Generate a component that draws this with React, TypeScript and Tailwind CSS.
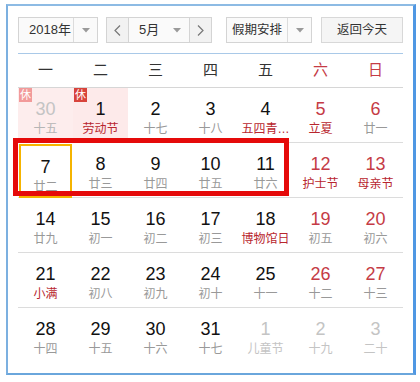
import React from "react";

type Cell = {
  n: string;
  l: string;
  nc?: string;
  lc?: string;
  bg?: string;
  badge?: string;
  today?: boolean;
};

const G = "text-[#111]";
const R = "text-[#c53b45]";
const LG = "text-[#999]";
const LR = "text-[#b8262e]";
const FADE = "text-[#c4c4c4]";

const rows: Cell[][] = [
  [
    { n: "30", l: "十五", nc: FADE, lc: "text-[#b5b5b5]", bg: "bg-[#fdeded]", badge: "bg-[#f29a9a]" },
    { n: "1", l: "劳动节", nc: G, lc: LR, bg: "bg-[#fdeaea]", badge: "bg-[#d8433b]" },
    { n: "2", l: "十七" },
    { n: "3", l: "十八" },
    { n: "4", l: "五四青…", lc: LR },
    { n: "5", l: "立夏", nc: R, lc: LR },
    { n: "6", l: "廿一", nc: R },
  ],
  [
    { n: "7", l: "廿二", today: true },
    { n: "8", l: "廿三" },
    { n: "9", l: "廿四" },
    { n: "10", l: "廿五" },
    { n: "11", l: "廿六" },
    { n: "12", l: "护士节", nc: R, lc: LR },
    { n: "13", l: "母亲节", nc: R, lc: LR },
  ],
  [
    { n: "14", l: "廿九" },
    { n: "15", l: "初一" },
    { n: "16", l: "初二" },
    { n: "17", l: "初三" },
    { n: "18", l: "博物馆日", lc: LR },
    { n: "19", l: "初五", nc: R },
    { n: "20", l: "初六", nc: R },
  ],
  [
    { n: "21", l: "小满", lc: LR },
    { n: "22", l: "初八" },
    { n: "23", l: "初九" },
    { n: "24", l: "初十" },
    { n: "25", l: "十一" },
    { n: "26", l: "十二", nc: R },
    { n: "27", l: "十三", nc: R },
  ],
  [
    { n: "28", l: "十四" },
    { n: "29", l: "十五" },
    { n: "30", l: "十六" },
    { n: "31", l: "十七" },
    { n: "1", l: "儿童节", nc: FADE, lc: "text-[#c4c4c4]" },
    { n: "2", l: "十九", nc: FADE, lc: "text-[#c4c4c4]" },
    { n: "3", l: "二十", nc: FADE, lc: "text-[#c4c4c4]" },
  ],
];

const Arrow = () => (
  <svg width="8" height="5" viewBox="0 0 8 5">
    <path d="M0 0 L8 0 L4 4.5 Z" fill="#9a9a9a" />
  </svg>
);

export default function App() {
  return (
    <div
      className="w-[420px] h-[382px] bg-white pt-[4px] pl-[6px]"
      style={{ fontFamily: '"Liberation Sans", "Noto Sans CJK SC", sans-serif' }}
    >
      <div className="relative w-[410px] h-[371px] border-t-2 border-l-2 border-b-[2px] border-r-[3px] border-t-[#8dbbe4] border-l-[#7cb0e0] border-b-[#6aa6dc] border-r-[#4f97e3] pl-[10px] pt-[11px]">
        {/* controls */}
        <div className="flex items-center h-[26px] text-[13px] text-[#333] whitespace-nowrap">
          <div className="flex h-[26px] w-[80px] shrink-0 border border-[#d4d4d4] bg-[#fafafa]">
            <div className="flex-1 flex items-center pl-[10px]">2018年</div>
            <div className="w-[24px] border-l border-[#dcdcdc] flex items-center justify-center">
              <Arrow />
            </div>
          </div>
          <div className="ml-[8px] flex h-[26px] w-[106px] shrink-0 border border-[#d4d4d4] bg-[#fafafa]">
            <div className="w-[22px] flex items-center justify-center bg-[#f2f2f2] border-r border-[#d4d4d4] text-[#777]">
              <svg width="7" height="11" viewBox="0 0 7 11">
                <path d="M6 0.5 L1 5.5 L6 10.5" stroke="#777" strokeWidth="1.2" fill="none" />
              </svg>
            </div>
            <div className="flex-1 flex items-center pl-[10px] pr-[8px] justify-between">
              <span>5月</span>
              <Arrow />
            </div>
            <div className="w-[22px] flex items-center justify-center bg-[#f2f2f2] border-l border-[#d4d4d4]">
              <svg width="7" height="11" viewBox="0 0 7 11">
                <path d="M1 0.5 L6 5.5 L1 10.5" stroke="#777" strokeWidth="1.2" fill="none" />
              </svg>
            </div>
          </div>
          <div className="ml-[14px] flex h-[26px] w-[86px] shrink-0 border border-[#d4d4d4] bg-[#fafafa]">
            <div className="flex-1 flex items-center justify-center text-[12.5px]">假期安排</div>
            <div className="w-[24px] shrink-0 border-l border-[#dcdcdc] flex items-center justify-center">
              <Arrow />
            </div>
          </div>
          <div className="ml-[9px] flex h-[26px] w-[82px] shrink-0 border border-[#d8d8d8] bg-[#f5f5f5] items-center justify-center text-[12.5px]">
            返回今天
          </div>
        </div>
        {/* divider */}
        <div className="mt-[10px] w-[385px] h-px bg-[#a9c9e8]" />
        {/* weekdays */}
        <div className="grid grid-cols-7 w-[385px] h-[34px] border-b border-[#d6d6d6] text-[15px] items-center text-center">
          {["一", "二", "三", "四", "五"].map((d) => (
            <div key={d} className="text-[#333]">{d}</div>
          ))}
          <div className="text-[#c53b45]">六</div>
          <div className="text-[#c53b45]">日</div>
        </div>
        {/* rows */}
        {rows.map((row, ri) => (
          <div
            key={ri}
            className={`grid grid-cols-7 w-[385px] h-[55px] ${ri < 4 ? "border-b border-[#dcdcdc]" : ""}`}
          >
            {row.map((c, ci) => (
              <div
                key={ci}
                className={`relative flex flex-col items-center pt-[10px] ${c.bg ?? ""} ${c.today ? "m-[1px] border-2 border-[#f5b400] pt-[8px]" : ""}`}
              >
                {c.badge && (
                  <div
                    className={`absolute left-[1px] top-0 w-[13px] h-[14px] ${c.badge} text-white text-[11px] leading-[14px] text-center`}
                  >
                    休
                  </div>
                )}
                <div className={`text-[18px] leading-[22px] ${c.nc ?? G}`}>{c.n}</div>
                <div className={`text-[12px] leading-[18px] whitespace-nowrap ${c.lc ?? LG}`}>{c.l}</div>
              </div>
            ))}
          </div>
        ))}
        {/* red annotation box */}
        <div className="absolute left-[5px] top-[132px] w-[276px] h-[58px] border-[5px] border-[#e50a0a] pointer-events-none" />
      </div>
    </div>
  );
}
